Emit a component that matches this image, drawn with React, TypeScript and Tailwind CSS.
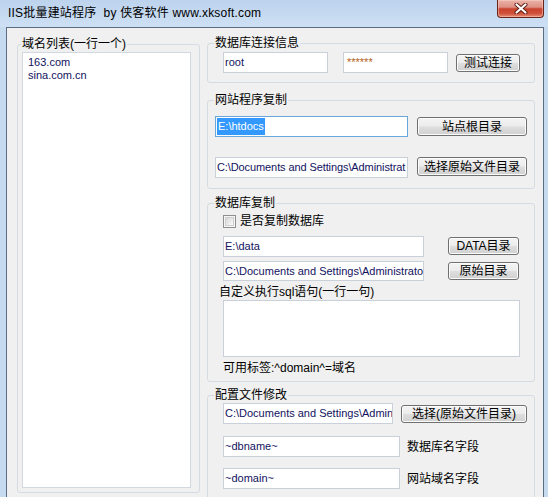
import React from 'react'

type FieldProps = {
  children?: React.ReactNode
  className?: string
  focused?: boolean
}

const Field = ({ children, className = '', focused = false }: FieldProps) => (
  <div
    className={`bg-white border ${focused ? 'border-[#6aa6dc]' : 'border-[#c9d0da]'} flex items-center pl-[1px] overflow-hidden whitespace-nowrap text-[11px] text-[#12125e] ${className}`}
  >
    {children}
  </div>
)

const Btn = ({ children, className = '' }: { children: React.ReactNode; className?: string }) => (
  <div
    className={`border border-[#707070] rounded-[3px] bg-[linear-gradient(to_bottom,#f4f4f4_0%,#ececec_48%,#dedede_52%,#d0d0d0_100%)] shadow-[inset_0_0_0_1px_#fbfbfb] flex items-center justify-center text-[12px] leading-[14px] text-black whitespace-nowrap ${className}`}
  >
    {children}
  </div>
)

const Group = ({ title, children, className = '' }: { title: string; children: React.ReactNode; className?: string }) => (
  <fieldset className={`border border-[#d5dbe2] rounded-[3px] ${className}`}>
    <legend className="ml-[6px] px-[1px] text-[12px] leading-[16px]">{title}</legend>
    {children}
  </fieldset>
)

const CloseButton = () => (
  <div className="w-[47px] h-[18px] border border-t-0 border-[#6b2219] rounded-b-[4px] bg-[linear-gradient(to_bottom,#eab2a8_0%,#de9184_42%,#c9432f_52%,#cf4f3a_78%,#e48c74_100%)] shadow-[inset_0_0_0_1px_rgba(255,220,210,0.45)] flex items-center justify-center">
    <svg width="14" height="11" viewBox="0 0 14 11">
      <path d="M2.5 1.5 L11.5 9.5 M11.5 1.5 L2.5 9.5" stroke="#5a1a12" strokeWidth="4" strokeLinecap="round" />
      <path d="M2.5 1.5 L11.5 9.5 M11.5 1.5 L2.5 9.5" stroke="#ffffff" strokeWidth="2.2" strokeLinecap="round" />
    </svg>
  </div>
)

const CheckBox = () => (
  <div className="w-[13px] h-[13px] border border-[#8e8f8f] bg-[#f6f6f6] p-[1px]">
    <div className="w-full h-full border border-[#cfcfcf] bg-gradient-to-br from-[#d8d8d8] to-[#fafafa]" />
  </div>
)

export default function App() {
  return (
    <div className="w-[548px] h-[497px] overflow-hidden flex flex-col bg-[#c6daf0] font-['Liberation_Sans','Noto_Sans_CJK_SC',sans-serif] text-[12px] text-black">
      {/* Title bar */}
      <div className="h-[27px] shrink-0 flex justify-between items-start pl-[8px] pr-[4px] bg-gradient-to-b from-[#bdd3ed] to-[#cde0f4]">
        <span className="mt-[5px] leading-[16px] whitespace-pre tracking-[0.2px]">IIS批量建站程序  by 侠客软件 www.xksoft.com</span>
        <CloseButton />
      </div>

      {/* Client area */}
      <div className="flex-1 ml-[6px] mr-[4px] border-l border-r border-t border-[#5b6d84] bg-[#f0f0f0] flex items-start">
        {/* Domain list */}
        <fieldset className="ml-[10px] mt-[8px] w-[183px] h-[457px] border border-[#d5dbe2] rounded-[3px]">
          <legend className="ml-[3px] px-[1px] text-[12px] leading-[16px]">域名列表(一行一个)</legend>
          <div className="pl-[4px]">
            <div className="w-[169px] h-[436px] bg-white border border-[#d2d8e0] pl-[5px] pt-[3px] text-[11px] leading-[13px] text-[#12125e]">
              <div>163.com</div>
              <div>sina.com.cn</div>
            </div>
          </div>
        </fieldset>

        {/* Right column */}
        <div className="ml-[7px] w-[328px] flex flex-col">
          {/* Database connection */}
          <Group title="数据库连接信息" className="mt-[7px]">
            <div className="pt-[1px] pl-[15px] pb-[9px] flex items-start">
              <Field className="w-[105px] h-[21px]">root</Field>
              <Field className="ml-[15px] w-[105px] h-[21px] text-[#b3621c] pl-[3px] items-start pt-[1px]">******</Field>
              <Btn className="ml-[8px] mt-[2px] w-[64px] h-[18px]">测试连接</Btn>
            </div>
          </Group>

          {/* Site program copy */}
          <Group title="网站程序复制" className="mt-[9px]">
            <div className="pl-[7px] pb-[10px] flex flex-col">
              <div className="mt-[8px] flex items-start">
                <Field focused className="w-[193px] h-[21px]">
                  <span className="bg-[#3399ff] text-white leading-[17px] px-[1px]">E:\htdocs</span>
                </Field>
                <Btn className="ml-[9px] mt-[1px] w-[110px] h-[19px]">站点根目录</Btn>
              </div>
              <div className="mt-[20px] flex items-start">
                <Field className="w-[193px] h-[21px] tracking-[-0.1px]">C:\Documents and Settings\Administrat</Field>
                <Btn className="ml-[9px] w-[110px] h-[19px]">选择原始文件目录</Btn>
              </div>
            </div>
          </Group>

          {/* Database copy */}
          <Group title="数据库复制" className="mt-[6px]">
            <div className="pl-[15px] pb-[5px] flex flex-col">
              <div className="mt-[4px] h-[13px] flex items-center">
                <CheckBox />
                <span className="ml-[4px] leading-[13px]">是否复制数据库</span>
              </div>
              <div className="mt-[8px] flex items-start">
                <Field className="w-[201px] h-[21px]">E:\data</Field>
                <Btn className="ml-[24px] mt-[1px] w-[71px] h-[18px]">DATA目录</Btn>
              </div>
              <div className="mt-[4px] flex items-start">
                <Field className="w-[201px] h-[20px]">C:\Documents and Settings\Administrato</Field>
                <Btn className="ml-[24px] mt-[1px] w-[71px] h-[18px]">原始目录</Btn>
              </div>
              <div className="mt-[3px] -ml-[4px] leading-[16px]">自定义执行sql语句(一行一句)</div>
              <div className="w-[297px] h-[57px] bg-white border border-[#c9d0da]" />
              <div className="mt-[3px] leading-[16px]">可用标签:^domain^=域名</div>
            </div>
          </Group>

          {/* Config file */}
          <Group title="配置文件修改" className="mt-[5px]">
            <div className="pl-[15px] pb-[20px] flex flex-col">
              <div className="flex items-start">
                <Field className="w-[170px] h-[21px]">C:\Documents and Settings\Admin</Field>
                <Btn className="ml-[8px] mt-[2px] w-[126px] h-[18px]">选择(原始文件目录)</Btn>
              </div>
              <div className="mt-[12px] flex items-center">
                <Field className="w-[177px] h-[21px]">~dbname~</Field>
                <span className="ml-[7px] leading-[16px]">数据库名字段</span>
              </div>
              <div className="mt-[11px] flex items-center">
                <Field className="w-[177px] h-[21px]">~domain~</Field>
                <span className="ml-[7px] leading-[16px]">网站域名字段</span>
              </div>
            </div>
          </Group>
        </div>
      </div>
    </div>
  )
}
